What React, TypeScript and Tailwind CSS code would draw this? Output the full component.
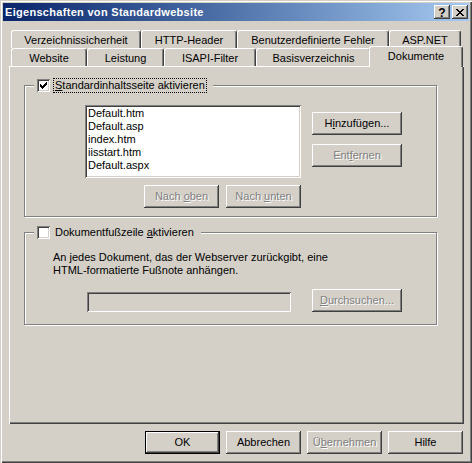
import React from "react";

const raised =
  "shadow-[inset_-1px_-1px_0_#404040,inset_1px_1px_0_#ffffff,inset_-2px_-2px_0_#808080]";
const sunken =
  "shadow-[inset_1px_1px_0_#808080,inset_-1px_-1px_0_#ffffff,inset_2px_2px_0_#404040,inset_-2px_-2px_0_#d4d0c8]";
const disabledText = "text-[#808080] [text-shadow:1px_1px_0_#ffffff]";

function TitleBtn({ children }: { children: React.ReactNode }) {
  return (
    <div
      className={`w-[16px] h-[14px] bg-[#d4d0c8] flex items-center justify-center ${raised}`}
    >
      {children}
    </div>
  );
}

function Btn({
  children,
  w,
  disabled,
  def,
}: {
  children: React.ReactNode;
  w: string;
  disabled?: boolean;
  def?: boolean;
}) {
  if (def) {
    return (
      <div className={`${w} h-[23px] border border-black bg-[#d4d0c8]`}>
        <div className={`w-full h-full flex items-center justify-center ${raised}`}>
          {children}
        </div>
      </div>
    );
  }
  return (
    <div
      className={`${w} h-[23px] bg-[#d4d0c8] flex items-center justify-center ${raised} ${
        disabled ? disabledText : ""
      }`}
    >
      {children}
    </div>
  );
}

function Tab({ w, children }: { w: string; children: React.ReactNode }) {
  return (
    <div
      className={`${w} h-[18px] shrink-0 flex items-center justify-center pt-[1px] border-l border-t border-r border-l-white border-t-white border-r-[#404040] rounded-tl-[3px] rounded-tr-[3px] shadow-[inset_-1px_0_0_#808080] bg-[#d4d0c8]`}
    >
      {children}
    </div>
  );
}

function CheckBox({ checked }: { checked?: boolean }) {
  return (
    <div className={`w-[13px] h-[13px] bg-white flex items-center justify-center ${sunken}`}>
      {checked && (
        <svg width="7" height="7" viewBox="0 0 7 7" shapeRendering="crispEdges">
          <rect x="0" y="2" width="1" height="3" fill="#000" />
          <rect x="1" y="3" width="1" height="3" fill="#000" />
          <rect x="2" y="4" width="1" height="3" fill="#000" />
          <rect x="3" y="3" width="1" height="3" fill="#000" />
          <rect x="4" y="2" width="1" height="3" fill="#000" />
          <rect x="5" y="1" width="1" height="3" fill="#000" />
          <rect x="6" y="0" width="1" height="3" fill="#000" />
        </svg>
      )}
    </div>
  );
}

const groupCls =
  "relative w-[413px] border border-[#808080] shadow-[inset_1px_1px_0_#ffffff,1px_1px_0_#ffffff]";

export default function App() {
  const files = ["Default.htm", "Default.asp", "index.htm", "iisstart.htm", "Default.aspx"];
  return (
    <div className="w-[472px] h-[463px] overflow-hidden bg-[#d4d0c8] p-[3px] font-['Liberation_Sans',Arial,sans-serif] text-[11px] leading-[13px] text-black shadow-[inset_1px_1px_0_#d4d0c8,inset_2px_2px_0_#ffffff,inset_-1px_-1px_0_#404040,inset_-2px_-2px_0_#808080]">
      {/* Title bar */}
      <div className="h-[18px] flex items-center justify-between bg-linear-to-r from-[#0a246a] to-[#a6caf0] pl-[2px] pr-[1px]">
        <span className="text-white font-bold tracking-[0.3px]">
          Eigenschaften von Standardwebsite
        </span>
        <div className="flex gap-[2px]">
          <TitleBtn>
            <span className="font-bold text-[12px] leading-[12px] pt-[1px]">?</span>
          </TitleBtn>
          <TitleBtn>
            <svg width="8" height="7" viewBox="0 0 8 7" shapeRendering="crispEdges">
              <rect x="0" y="0" width="2" height="1" fill="#000" />
              <rect x="6" y="0" width="2" height="1" fill="#000" />
              <rect x="1" y="1" width="2" height="1" fill="#000" />
              <rect x="5" y="1" width="2" height="1" fill="#000" />
              <rect x="2" y="2" width="4" height="1" fill="#000" />
              <rect x="3" y="3" width="2" height="1" fill="#000" />
              <rect x="2" y="4" width="4" height="1" fill="#000" />
              <rect x="1" y="5" width="2" height="1" fill="#000" />
              <rect x="5" y="5" width="2" height="1" fill="#000" />
              <rect x="0" y="6" width="2" height="1" fill="#000" />
              <rect x="6" y="6" width="2" height="1" fill="#000" />
            </svg>
          </TitleBtn>
        </div>
      </div>

      <div className="pl-[6px] pt-[9px]">
        {/* Tabs */}
        <div className="relative z-10 pl-[2px]">
          <div className="flex h-[18px]">
            <Tab w="w-[130px]">Verzeichnissicherheit</Tab>
            <Tab w="w-[96px]">HTTP-Header</Tab>
            <Tab w="w-[152px]">Benutzerdefinierte Fehler</Tab>
            <Tab w="w-[72px]">ASP.NET</Tab>
          </div>
          <div className="flex h-[18px] items-end">
            <Tab w="w-[76px]">Website</Tab>
            <Tab w="w-[77px]">Leistung</Tab>
            <Tab w="w-[92px]">ISAPI-Filter</Tab>
            <Tab w="w-[115px]">Basisverzeichnis</Tab>
            <div className="relative z-10 -ml-[2px] -mb-[1px] w-[94px] h-[21px] shrink-0 flex items-center justify-center pb-[2px] bg-[#d4d0c8] border-l border-t border-r border-l-white border-t-white border-r-[#404040] rounded-tl-[3px] rounded-tr-[3px] shadow-[inset_-1px_0_0_#808080]">
              Dokumente
            </div>
          </div>
        </div>

        {/* Panel */}
        <div className="w-[455px] h-[358px] bg-[#d4d0c8] pt-[19px] pl-[15px] shadow-[inset_1px_1px_0_#ffffff,inset_-1px_-1px_0_#404040,inset_-2px_-2px_0_#808080]">
          {/* Group 1 */}
          <div className={`${groupCls} h-[132px]`}>
            <div className="absolute left-[9px] top-[-8px] h-[15px] flex items-center pl-[3px] pr-[6px] bg-[#d4d0c8]">
              <CheckBox checked />
              <div className="ml-[3px] h-[15px] px-[1px] border border-dotted border-black flex items-center">
                <span>
                  <u>S</u>tandardinhaltsseite aktivieren
                </span>
              </div>
            </div>
            <div className="pl-[60px] pt-[19px]">
              <div className="flex">
                <div className={`w-[216px] h-[73px] bg-white p-[2px] ${sunken}`}>
                  {files.map((f) => (
                    <div key={f} className="h-[13px] pl-[1px]">
                      {f}
                    </div>
                  ))}
                </div>
                <div className="ml-[11px] mt-[7px] flex flex-col gap-[9px]">
                  <Btn w="w-[90px]">
                    <span>
                      H<u>i</u>nzufügen...
                    </span>
                  </Btn>
                  <Btn w="w-[90px]" disabled>
                    <span>
                      Ent<u>f</u>ernen
                    </span>
                  </Btn>
                </div>
              </div>
              <div className="w-[216px] mt-[7px] flex justify-end gap-[7px]">
                <Btn w="w-[75px]" disabled>
                  <span>
                    Nach <u>o</u>ben
                  </span>
                </Btn>
                <Btn w="w-[75px]" disabled>
                  <span>
                    Nach <u>u</u>nten
                  </span>
                </Btn>
              </div>
            </div>
          </div>

          {/* Group 2 */}
          <div className={`${groupCls} h-[93px] mt-[15px]`}>
            <div className="absolute left-[9px] top-[-8px] h-[15px] flex items-center pl-[3px] pr-[5px] bg-[#d4d0c8]">
              <CheckBox />
              <div className="ml-[3px] h-[15px] px-[1px] border border-transparent flex items-center">
                <span>
                  Dokumentfußzeile <u>a</u>ktivieren
                </span>
              </div>
            </div>
            <div className="pl-[28px] pt-[18px]">
              <div>An jedes Dokument, das der Webserver zurückgibt, eine</div>
              <div>HTML-formatierte Fußnote anhängen.</div>
              <div className="ml-[34px] mt-[12px] flex items-end gap-[21px]">
                <div className={`w-[204px] h-[20px] bg-[#d4d0c8] ${sunken}`} />
                <Btn w="w-[90px]" disabled>
                  <span>
                    <u>D</u>urchsuchen...
                  </span>
                </Btn>
              </div>
            </div>
          </div>
        </div>

        {/* Dialog buttons */}
        <div className="w-[455px] mt-[7px] pr-[1px] flex justify-end gap-[6px]">
          <Btn w="w-[75px]" def>
            OK
          </Btn>
          <Btn w="w-[75px]">Abbrechen</Btn>
          <Btn w="w-[75px]" disabled>
            <span>
              Ü<u>b</u>ernehmen
            </span>
          </Btn>
          <Btn w="w-[75px]">Hilfe</Btn>
        </div>
      </div>
    </div>
  );
}
